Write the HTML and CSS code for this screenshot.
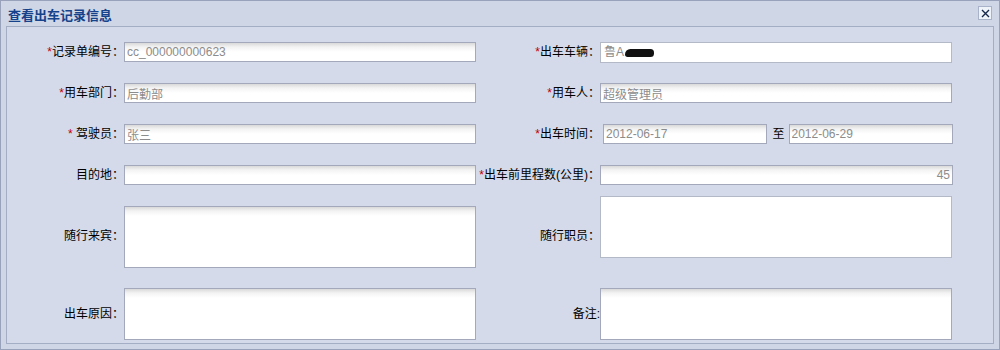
FILE: index.html
```html
<!DOCTYPE html>
<html lang="zh-CN">

<head>
    <meta charset="UTF-8">
    <title>查看出车记录信息</title>
    <link rel="stylesheet" href="styles.css">
</head>

<body>
    <div class="window">
        <div class="win-header">
            <span class="win-title">查看出车记录信息</span>
            <span class="win-close">
                <svg width="9" height="9" viewBox="0 0 9 9">
                    <path d="M1 1 L8 8 M8 1 L1 8" stroke="#15284b" stroke-width="1.4" fill="none"/>
                </svg>
            </span>
        </div>

        <div class="win-body">
            <form class="record-form">
                <!-- row 1 -->
                <label class="lbl"><em>*</em>记录单编号：</label>
                <input class="txt" type="text" value="cc_000000000623" readonly>
                <label class="lbl"><em>*</em>出车车辆：</label>
                <div class="txt plain tall">鲁A<span class="blot"></span></div>

                <!-- row 2 -->
                <label class="lbl"><em>*</em>用车部门：</label>
                <input class="txt" type="text" value="后勤部" readonly>
                <label class="lbl"><em>*</em>用车人：</label>
                <input class="txt" type="text" value="超级管理员" readonly>

                <!-- row 3 -->
                <label class="lbl"><em>*</em> 驾驶员：</label>
                <input class="txt" type="text" value="张三" readonly>
                <label class="lbl"><em>*</em>出车时间：</label>
                <div class="date-range">
                    <input class="txt" type="text" value="2012-06-17" readonly>
                    <span class="to">至</span>
                    <input class="txt" type="text" value="2012-06-29" readonly>
                </div>

                <!-- row 4 -->
                <label class="lbl">目的地：</label>
                <input class="txt" type="text" value="" readonly>
                <label class="lbl"><em>*</em>出车前里程数(公里)：</label>
                <input class="txt num" type="text" value="45" readonly>

                <!-- row 5 -->
                <label class="lbl lbl-area">随行来宾：</label>
                <textarea class="txt area guest" readonly></textarea>
                <label class="lbl lbl-area">随行职员：</label>
                <textarea class="txt area plain" readonly></textarea>

                <!-- row 6 -->
                <label class="lbl lbl-mid">出车原因：</label>
                <textarea class="txt area short" readonly></textarea>
                <label class="lbl lbl-mid">备注:</label>
                <textarea class="txt area short" readonly></textarea>
            </form>
        </div>
    </div>
</body>

</html>
```

FILE: styles.css
```css
body {
    margin: 0;
    padding: 0;
    font-family: "Liberation Sans", "Noto Sans CJK SC", sans-serif;
    font-size: 12px;
    background-color: #cfd7e7;
}

.window {
    width: 1000px;
    height: 350px;
    box-sizing: border-box;
    border: 1px solid #98a2ba;
    background-color: #cfd7e7;
    padding: 0 5px 5px 5px;
    overflow: hidden;
}

.win-header {
    height: 25px;
    display: flex;
    align-items: center;
    justify-content: space-between;
    padding: 0 2px 0 2px;
}

.win-title {
    font-size: 13px;
    font-weight: bold;
    color: #15428b;
    margin-top: 1px;
}

.win-close {
    width: 12px;
    height: 12px;
    border: 1px solid #a8b2c8;
    background-color: #eef2f9;
    display: flex;
    align-items: center;
    justify-content: center;
    margin-top: -1px;
}

.win-body {
    height: 318px;
    box-sizing: border-box;
    border: 1px solid #a3aec5;
    background-color: #d4dae9;
    overflow: hidden;
}

.record-form {
    display: grid;
    grid-template-columns: 117px 353px 123px 353px;
    grid-template-rows: 41px 41px 41px 31px 92px 52px;
    align-items: start;
    padding-top: 15px;
    margin: 0;
}

.lbl {
    text-align: right;
    line-height: 20px;
    white-space: nowrap;
    color: #000;
}

.lbl em {
    font-style: normal;
    color: #c00000;
}

.lbl-area {
    margin-top: 30px;
}

.lbl-mid {
    align-self: center;
}

.txt {
    width: 352px;
    height: 20px;
    box-sizing: border-box;
    margin: 0;
    padding: 1px 2px;
    border: 1px solid #a3a9ba;
    font-family: "Liberation Sans", "Noto Sans CJK SC", sans-serif;
    font-size: 12px;
    color: #8c8c8c;
    background: linear-gradient(to bottom, #d9d9d9 0, #f3f3f3 4px, #fff 9px);
    outline: none;
}

.plain {
    background: #fff;
    border-color: #b4b9c8;
}

.tall {
    height: 21px;
    line-height: 17px;
    padding-left: 3px;
}

.blot {
    display: inline-block;
    width: 29px;
    height: 8px;
    margin-left: 1px;
    vertical-align: -1px;
    background-color: #111;
    border-radius: 6px 4px 4px 3px;
}

.num {
    text-align: right;
    width: 353px;
}

.date-range {
    display: flex;
    align-items: center;
    padding-left: 3px;
}

.date-range .txt {
    width: 165px;
}

.to {
    color: #000;
    margin: 0 4px 0 5px;
    line-height: 20px;
}

.area {
    resize: none;
    height: 62px;
    display: block;
}

.guest {
    margin-top: 10px;
}

.short {
    height: 52px;
}
```
